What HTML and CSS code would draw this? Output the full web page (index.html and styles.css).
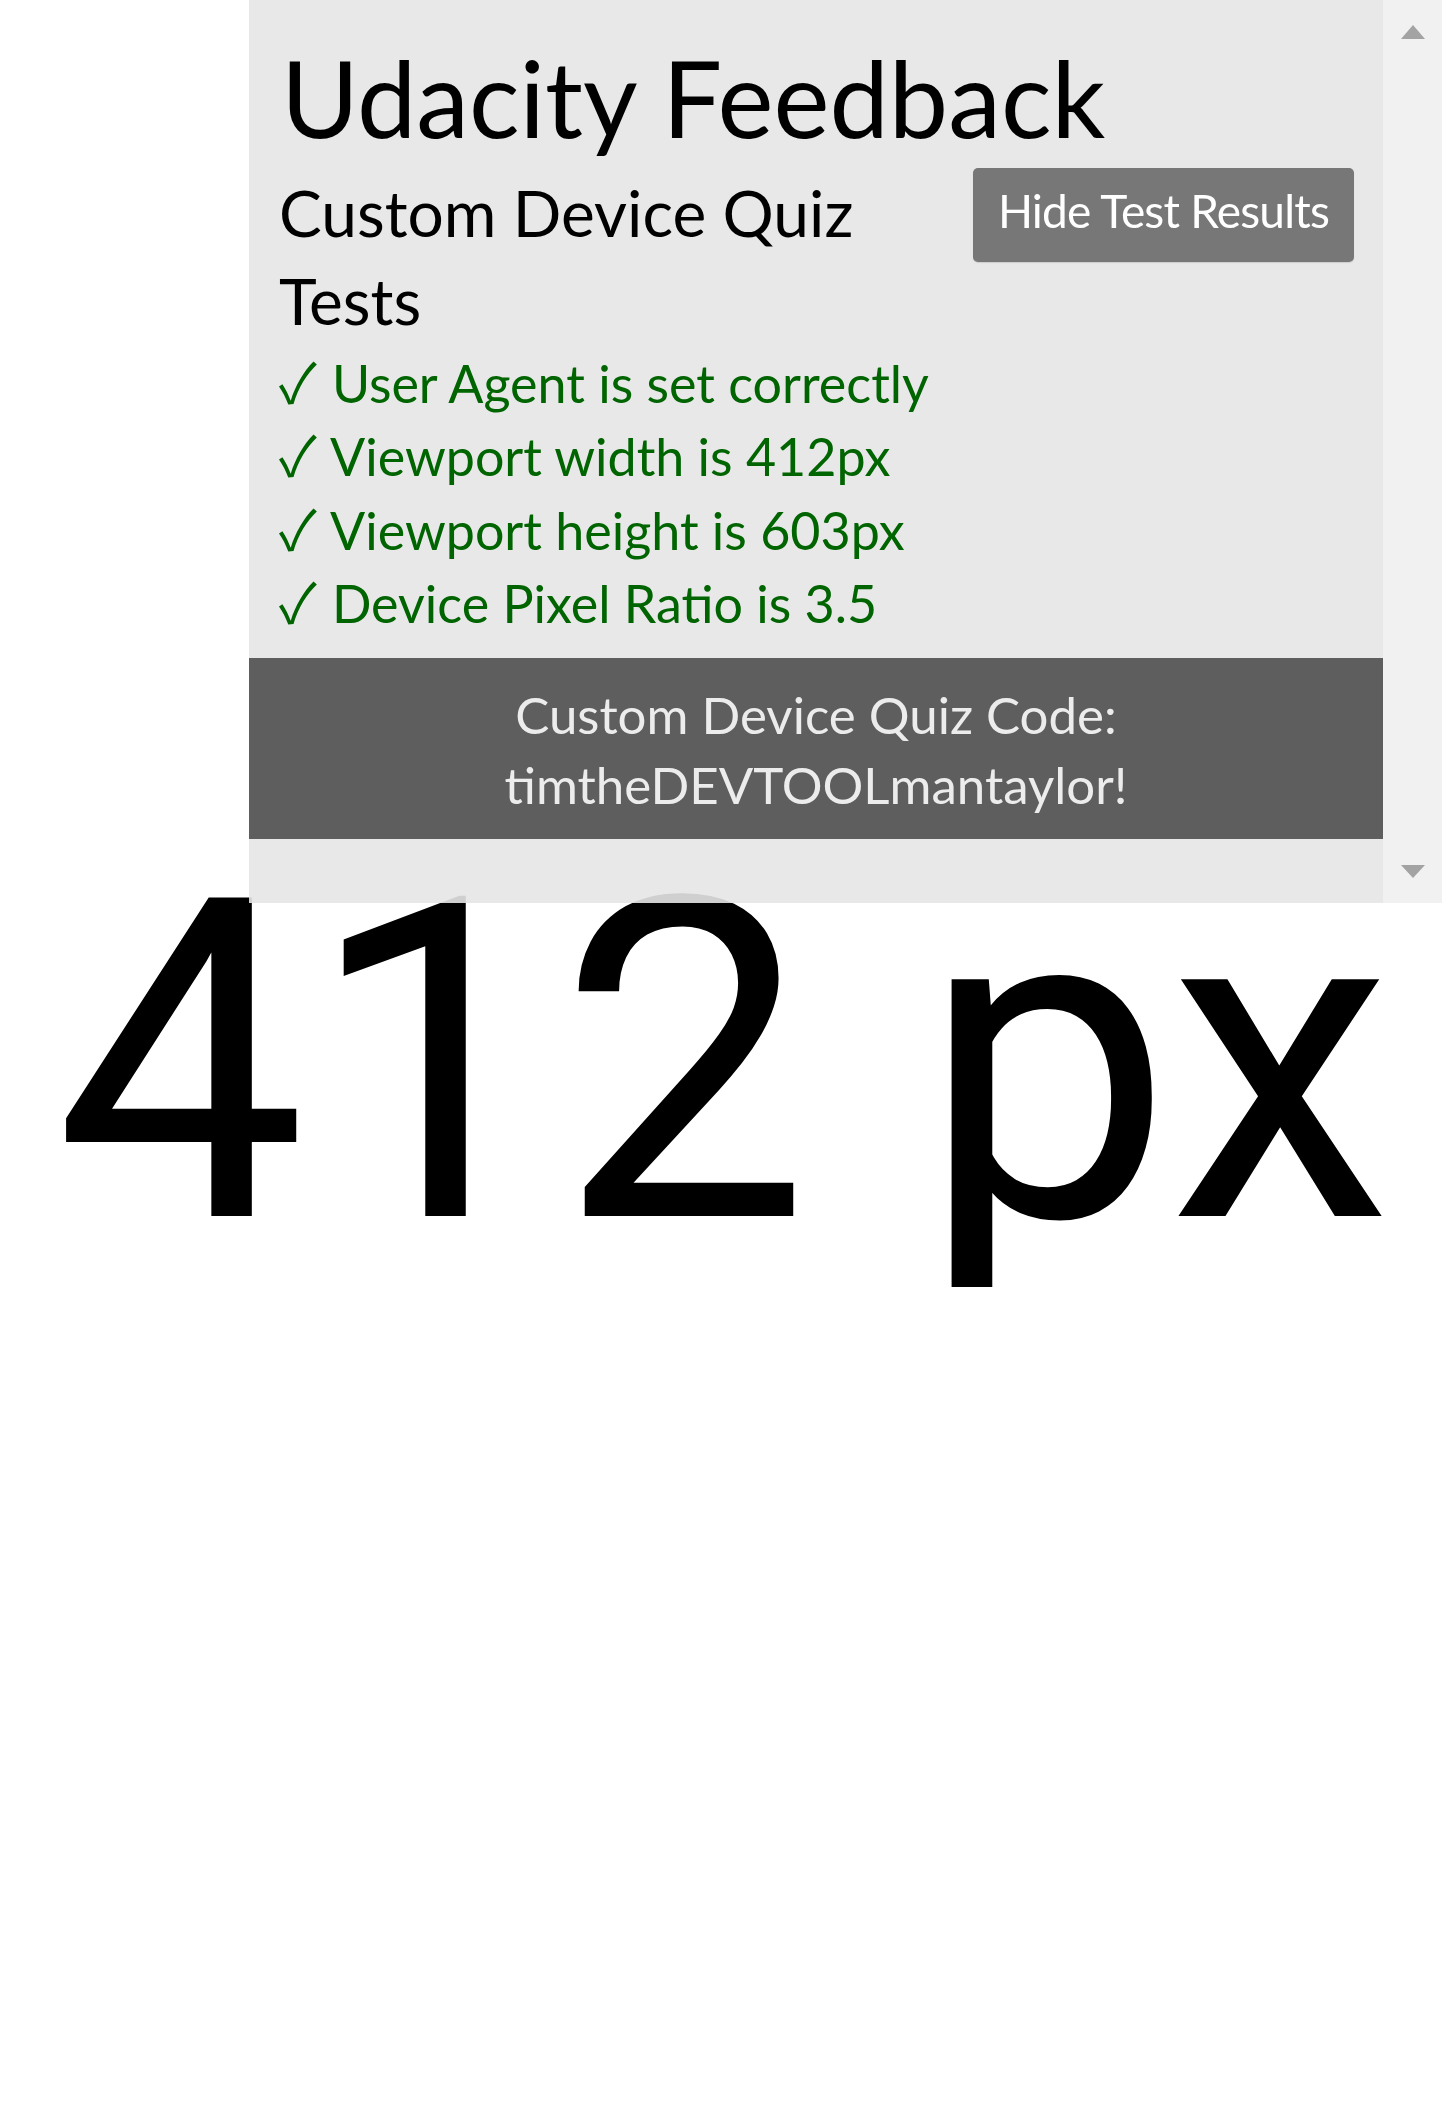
FILE: index.html
```html
<!DOCTYPE html>
<html lang="en">
<head>
<meta charset="utf-8">
<title>Custom Device Quiz</title>
<link rel="stylesheet" href="styles.css">
</head>
<body>
<main class="page">
  <div class="viewport-width">412 px</div>
</main>

<aside class="feedback">
  <div class="feedback-body">
    <h1 class="feedback-title">Udacity Feedback</h1>
    <div class="quiz-head">
      <h2 class="quiz-name">Custom Device Quiz<br>Tests</h2>
      <button class="toggle-btn" type="button">Hide Test Results</button>
    </div>
    <ul class="tests">
      <li class="test pass"><span class="mark">✓</span> User Agent is set correctly</li>
      <li class="test pass"><span class="mark">✓</span> Viewport width is 412px</li>
      <li class="test pass"><span class="mark">✓</span> Viewport height is 603px</li>
      <li class="test pass"><span class="mark">✓</span> Device Pixel Ratio is 3.5</li>
    </ul>
    <div class="code-band">Custom Device Quiz Code:<br>timtheDEVTOOLmantaylor!</div>
  </div>
  <div class="scrollbar">
    <span class="arrow arrow-up"></span>
    <span class="arrow arrow-down"></span>
  </div>
</aside>
</body>
</html>
```

FILE: styles.css
```css
html, body {
  margin: 0;
  padding: 0;
  background: #ffffff;
}

.page {
  padding-top: 839px;
}

.viewport-width {
  font-family: Roboto, "Liberation Sans", sans-serif;
  font-size: 448px;
  line-height: 448px;
  text-align: center;
  color: #000;
  white-space: nowrap;
  padding-left: 4px;
}

.feedback {
  position: fixed;
  top: 0;
  right: 0;
  width: 1193px;
  height: 903px;
  display: flex;
  background: rgba(230, 230, 230, 0.9);
  font-family: Lato, "Noto Sans", sans-serif;
  color: #000;
}

.feedback-body {
  flex: 1;
  padding-top: 37px;
  overflow: hidden;
}

.feedback-title {
  margin: 0;
  padding-left: 32px;
  font-size: 106px;
  line-height: 120px;
  font-weight: 400;
}

.quiz-head {
  display: flex;
  justify-content: space-between;
  align-items: flex-start;
  margin-top: 12px;
  padding: 0 29px 0 30px;
}

.quiz-name {
  margin: 0;
  font-size: 64px;
  line-height: 88px;
  font-weight: 400;
}

.toggle-btn {
  margin-top: -1px;
  height: 94px;
  padding: 13px 25px 21px;
  border: 0;
  border-radius: 5px;
  background: #777777;
  color: #ffffff;
  font-family: inherit;
  font-size: 46px;
  line-height: 60px;
  letter-spacing: -0.8px;
  box-shadow: 0 1px 1px rgba(0, 0, 0, 0.12);
}

.tests {
  list-style: none;
  margin: 2px 0 0;
  padding: 0 0 0 30px;
}

.test {
  font-size: 52px;
  line-height: 73.3px;
  color: #006400;
  white-space: nowrap;
}

.mark {
  font-family: "Noto Sans CJK JP", "DejaVu Sans", sans-serif;
  font-size: 55px;
  line-height: 0;
  margin-right: 2px;
}

.code-band {
  margin-top: 18px;
  padding: 22px 0 19px;
  background: #5e5e5e;
  color: #ececec;
  font-size: 51px;
  line-height: 70px;
  text-align: center;
}

.scrollbar {
  width: 59px;
  flex: none;
  background: #f1f1f1;
  display: flex;
  flex-direction: column;
  align-items: center;
  justify-content: space-between;
  padding: 25px 0 25px;
  box-sizing: border-box;
}

.arrow {
  width: 0;
  height: 0;
  border-left: 12.5px solid transparent;
  border-right: 12.5px solid transparent;
}

.arrow-up {
  border-bottom: 14px solid #a3a3a3;
}

.arrow-down {
  border-top: 13px solid #a3a3a3;
}
```
